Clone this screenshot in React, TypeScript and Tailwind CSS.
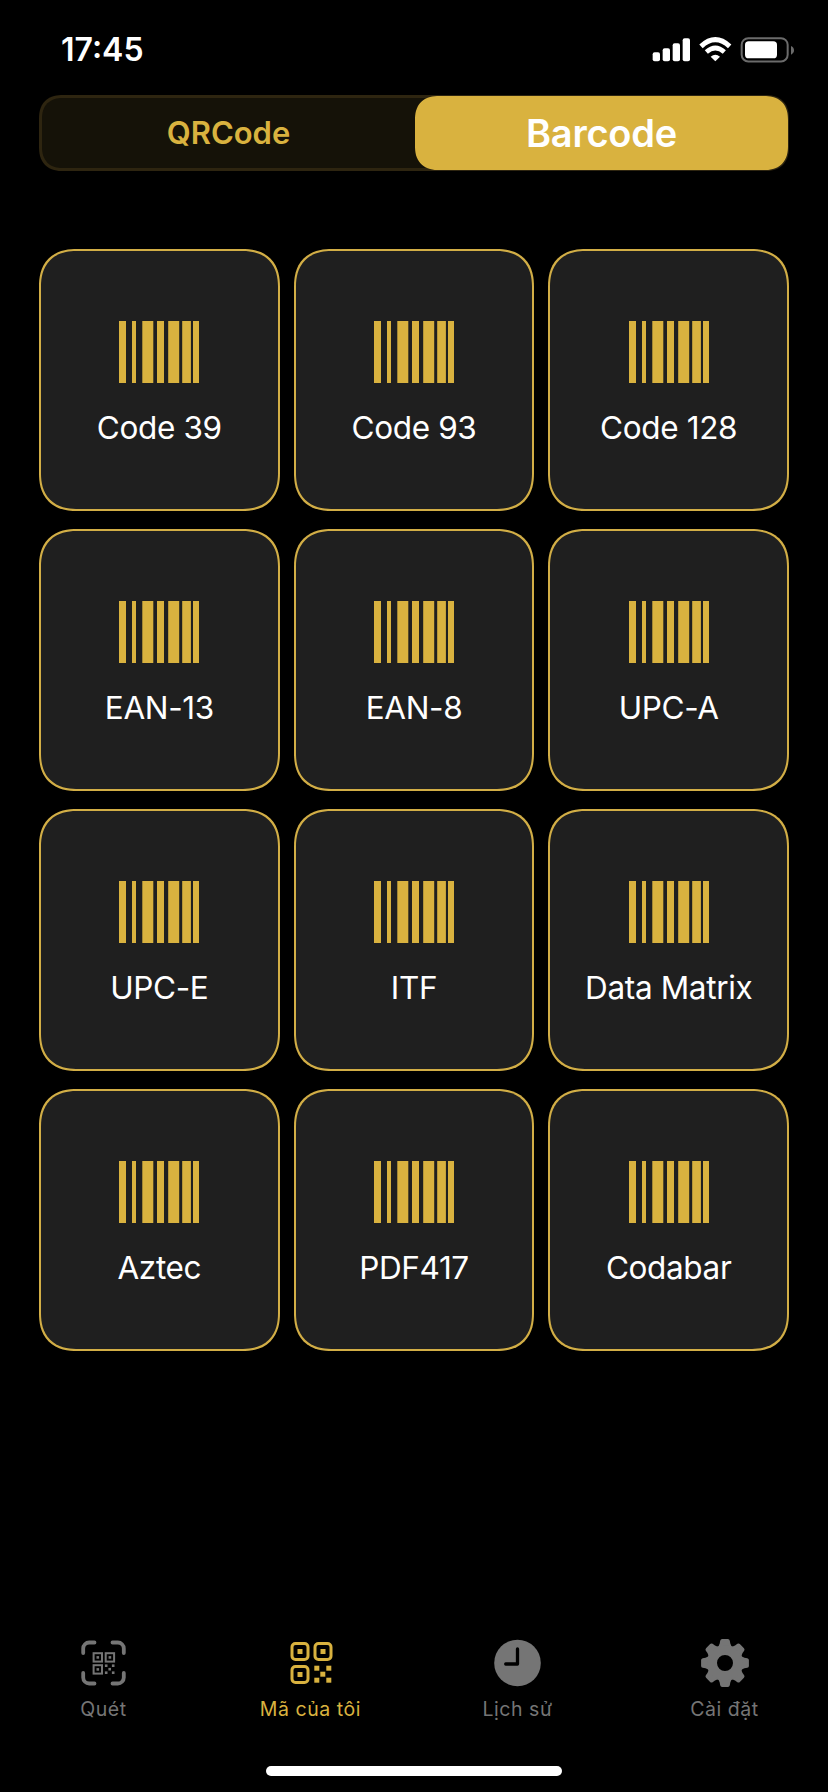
import React from "react";

const barcodeTypes: string[] = [
  "Code 39", "Code 93", "Code 128",
  "EAN-13", "EAN-8", "UPC-A",
  "UPC-E", "ITF", "Data Matrix",
  "Aztec", "PDF417", "Codabar",
];

function StatusIcons() {
  return (
    <svg className="h-[26px] w-[142px]" viewBox="0 0 426 78" fill="none">
      <g fill="#fff">
        <rect x="2" y="46" width="22" height="27" rx="6" />
        <rect x="32" y="34" width="22" height="39" rx="6" />
        <rect x="62" y="19" width="22" height="54" rx="6" />
        <rect x="92" y="4" width="22" height="69" rx="6" />
        <path d="M190 73 L176 59 Q190 48 204 59 Z" />
      </g>
      <path d="M147 28 Q190 -12 233 28" stroke="#fff" strokeWidth="15" />
      <path d="M163 45 Q190 21 217 45" stroke="#fff" strokeWidth="14" />
      <rect x="269" y="3.500" width="138" height="70" rx="20" stroke="#6b6b6b" strokeWidth="6" />
      <rect x="279" y="13" width="96" height="51" rx="11" fill="#fff" />
      <path d="M417 27 Q426 31 426 40 Q426 49 417 53 Z" fill="#6b6b6b" />
    </svg>
  );
}

function BarcodeIcon() {
  return (
    <svg className="h-[62px] w-20" viewBox="0 0 80 62" fill="#d9b23f">
      <rect x="0" width="7" height="62" />
      <rect x="13" width="4" height="62" />
      <rect x="23.300" width="11" height="62" />
      <rect x="38" width="7" height="62" />
      <rect x="49.200" width="11" height="62" />
      <rect x="63.200" width="8.700" height="62" />
      <rect x="74" width="6" height="62" />
    </svg>
  );
}

function ScanIcon() {
  return (
    <svg className="size-12" viewBox="0 0 48 48" fill="none" stroke="#757575">
      <path
        d="M3.200 14V9.500a6 6 0 0 1 6-6H14.500M32.500 3.500h5.300a6 6 0 0 1 6 6V14M43.800 34v4.500a6 6 0 0 1-6 6H32.500M14.500 44.500H9.200a6 6 0 0 1-6-6V34"
        strokeWidth="3.800"
        strokeLinecap="round"
      />
      <g strokeWidth="2">
        <rect x="13.600" y="14.200" width="8.400" height="8.400" />
        <rect x="25.700" y="14.200" width="8.400" height="8.400" />
        <rect x="13.600" y="26.200" width="8.400" height="8.400" />
      </g>
      <g fill="#757575" stroke="none">
        <rect x="16.500" y="17.100" width="2.600" height="2.600" />
        <rect x="28.600" y="17.100" width="2.600" height="2.600" />
        <rect x="16.500" y="29.100" width="2.600" height="2.600" />
        <rect x="24.900" y="25.400" width="2.600" height="2.600" />
        <rect x="31.900" y="25.400" width="2.600" height="2.600" />
        <rect x="28.400" y="28.900" width="2.600" height="2.600" />
        <rect x="24.900" y="32.400" width="2.600" height="2.600" />
        <rect x="31.900" y="32.400" width="2.600" height="2.600" />
      </g>
    </svg>
  );
}

function QrIcon() {
  return (
    <svg className="size-12" viewBox="0 0 48 48" fill="none" stroke="#d9b23f">
      <g strokeWidth="3">
        <rect x="5" y="4.500" width="16" height="16" rx="3.500" />
        <rect x="28" y="4.500" width="16" height="16" rx="3.500" />
        <rect x="5" y="27.500" width="16" height="16" rx="3.500" />
      </g>
      <g fill="#d9b23f" stroke="none">
        <rect x="10.500" y="10" width="5" height="5" />
        <rect x="33.500" y="10" width="5" height="5" />
        <rect x="10.500" y="33" width="5" height="5" />
        <rect x="27.300" y="26.700" width="5" height="5" />
        <rect x="39.300" y="26.700" width="5" height="5" />
        <rect x="33.300" y="32.700" width="5" height="5" />
        <rect x="27.300" y="38.700" width="5" height="5" />
        <rect x="39.300" y="38.700" width="5" height="5" />
      </g>
    </svg>
  );
}

function ClockIcon() {
  return (
    <svg className="size-12" viewBox="0 0 48 48" fill="none">
      <circle cx="23.500" cy="24" r="23.300" fill="#757575" />
      <path d="M23.500 10V25H11.700" stroke="#000" strokeWidth="3.300" strokeLinecap="round" strokeLinejoin="round" />
    </svg>
  );
}

function GearIcon() {
  return (
    <svg className="size-12" viewBox="-24 -24 48 48" fill="#757575">
      {[0, 45, 90, 135, 180, 225, 270, 315].map((angle) => (
        <path
          key={angle}
          transform={`rotate(${angle})`}
          d="M-8 -15.500 Q-5.800 -17.200 -5.300 -19.500 L-4.800 -22.300 Q-4.400 -23.900 -2.900 -23.900 H2.900 Q4.400 -23.900 4.800 -22.300 L5.300 -19.500 Q5.800 -17.200 8 -15.500 Z"
        />
      ))}
      <circle r="12.700" fill="none" stroke="#757575" strokeWidth="9.400" />
    </svg>
  );
}

const tabs = [
  { label: "Quét", icon: ScanIcon, active: false },
  { label: "Mã của tôi", icon: QrIcon, active: true },
  { label: "Lịch sử", icon: ClockIcon, active: false },
  { label: "Cài đặt", icon: GearIcon, active: false },
];

export default function App() {
  return (
    <div className="flex h-[1792px] w-[828px] flex-col bg-black font-['Inter',sans-serif] text-white">
      <header className="flex h-[95px] items-start justify-between pt-[30px] pr-[34px] pl-[61px]">
        <span className="text-[32px] leading-10 font-semibold">17:45</span>
        <div className="pt-[7px]">
          <StatusIcons />
        </div>
      </header>

      <div className="mx-[39px] flex h-[76px] rounded-[24px] border-[3px] border-[#2e2510] bg-[#151208] [corner-shape:superellipse(1.25)]">
        <button className="flex-1 text-[31px] font-semibold text-[#d9b23f]">QRCode</button>
        <button className="-my-[2px] -mr-[2px] flex-1 rounded-[24px] bg-[#d9b23f] text-[38px] font-semibold tracking-[-0.2px] [corner-shape:superellipse(1.25)]">
          Barcode
        </button>
      </div>

      <main className="mx-[39px] mt-[78px] grid grid-cols-3 gap-x-[14px] gap-y-[18px]">
        {barcodeTypes.map((type) => (
          <button
            key={type}
            className="flex h-[262px] flex-col items-center rounded-[38px] border-2 border-[#d2ae46] bg-[#1f1f1f] pt-[70px] [corner-shape:superellipse(1.25)]"
          >
            <BarcodeIcon />
            <span className="mt-[25px] text-[31.5px] leading-10 tracking-[-0.35px]">{type}</span>
          </button>
        ))}
      </main>

      <nav className="mt-auto grid h-[127px] grid-cols-4">
        {tabs.map(({ label, icon: Icon, active }) => (
          <div
            key={label}
            className={`flex flex-col items-center ${active ? "text-[#d9b23f]" : "text-[#757575]"}`}
          >
            <Icon />
            <span className="mt-2 text-[19.5px] leading-7 tracking-[0.55px]">{label}</span>
          </div>
        ))}
      </nav>
      <div className="mx-auto mb-4 h-[10px] w-[296px] rounded-full bg-white" />
    </div>
  );
}
